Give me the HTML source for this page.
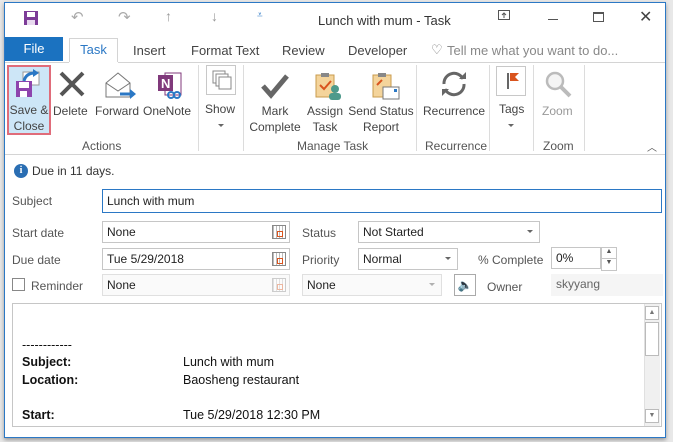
<!DOCTYPE html>
<html><head><meta charset="utf-8"><style>
*{box-sizing:border-box;margin:0;padding:0}
body{width:673px;height:442px;background:#e8e8e8;font-family:"Liberation Sans",sans-serif;font-size:12px;color:#444;position:relative;overflow:hidden}
.a{position:absolute;white-space:nowrap}
#win{position:absolute;left:4px;top:2px;width:662px;height:436px;background:#fff;border:1px solid #2b78c5;box-shadow:0 2px 4px rgba(0,0,0,.35)}
.inp{position:absolute;border:1px solid #c6c6c6;background:#fff;height:22px;padding:3px 4px;color:#222;font-size:12px}
.dis{background:#fafafa;border-color:#e0e0e0}
.lbl{position:absolute;color:#555;font-size:12px}
.rb{position:absolute;text-align:center;font-size:12px;color:#444;line-height:16px}
.sep{position:absolute;top:62px;width:1px;height:86px;background:#dcdcdc}
.gl{position:absolute;top:136px;font-size:12px;color:#555}
.dd{position:absolute;right:6px;top:8px;border-left:3px solid transparent;border-right:3px solid transparent;border-top:3px solid #666}
.cal{position:absolute;right:3px;top:3px;width:14px;height:14px;border:1px solid #888;background:repeating-linear-gradient(90deg,#bbb 0 1px,#fff 1px 3px)}
.cal:after{content:"";position:absolute;right:2px;top:5px;width:4px;height:4px;border:1px solid #d9541e}
.bt{position:absolute;color:#111;font-size:12.5px}
</style></head><body>
<div id="win">
<svg class="a" style="left:18px;top:7px" width="16" height="16"><rect x="1" y="1" width="14" height="14" fill="#7d3c98"/><rect x="4" y="2" width="8" height="5" fill="#fff"/><rect x="4" y="10" width="8" height="5" fill="#e8daef"/></svg>
<div class="a" style="left:66px;top:5px;color:#aaa;font-size:15px">↶</div>
<div class="a" style="left:113px;top:5px;color:#aaa;font-size:15px">↷</div>
<div class="a" style="left:160px;top:5px;color:#999;font-size:14px">↑</div>
<div class="a" style="left:206px;top:5px;color:#999;font-size:14px">↓</div>
<div class="a" style="left:252px;top:7px;color:#2b78c5;font-size:10px">⩡</div>
<div class="a" style="left:313px;top:10px;font-size:13px;color:#333">Lunch with mum - Task</div>
<svg class="a" style="left:493px;top:7px" width="12" height="12"><rect x=".5" y=".5" width="11" height="9" fill="none" stroke="#555"/><path d="M6 8V3M4 5l2-2 2 2" stroke="#555" fill="none"/></svg>
<div class="a" style="left:543px;top:16px;width:10px;height:1px;background:#555"></div>
<div class="a" style="left:588px;top:9px;width:11px;height:10px;border:1px solid #555;border-top-width:2px"></div>
<div class="a" style="left:634px;top:4px;font-size:16px;color:#444">✕</div>
<div class="a" style="left:0;top:34px;width:58px;height:24px;background:#1b72c0;color:#fff;font-size:13px;text-align:center;line-height:23px">File</div>
<div class="a" style="left:64px;top:35px;width:49px;height:25px;background:#fff;border:1px solid #d4d4d4;border-bottom:none;color:#2b78c5;font-size:13px;text-align:center;line-height:22px">Task</div>
<div class="a" style="left:0;top:59px;width:660px;height:1px;background:#d4d4d4"></div>
<div class="a" style="left:64px;top:59px;width:49px;height:1px;background:#fff"></div>
<div class="a" style="left:128px;top:40px;font-size:13px;color:#444">Insert</div>
<div class="a" style="left:186px;top:40px;font-size:13px;color:#444">Format Text</div>
<div class="a" style="left:277px;top:40px;font-size:13px;color:#444">Review</div>
<div class="a" style="left:343px;top:40px;font-size:13px;color:#444">Developer</div>
<div class="a" style="left:426px;top:39px;font-size:13px;color:#777">♡</div>
<div class="a" style="left:442px;top:40px;font-size:13px;color:#888">Tell me what you want to do...</div>
<div class="a" style="left:2px;top:62px;width:44px;height:70px;background:#cde6f7;border:2px solid #e06c7a"></div>
<svg class="a" style="left:9px;top:66px" width="30" height="30"><rect x="9" y="3" width="16" height="13" fill="#fff" stroke="#999"/><rect x="2" y="12" width="16" height="16" fill="#8e44ad"/><rect x="5" y="13" width="10" height="6" fill="#fff"/><rect x="6" y="22" width="7" height="6" fill="#fff"/><path d="M10 12q2-8 11-8" stroke="#2b78c5" stroke-width="3" fill="none"/><path d="M19 0l6 4-6 4z" fill="#2b78c5"/></svg>
<div class="rb" style="left:3px;top:99px;width:42px">Save &amp;<br>Close</div>
<svg class="a" style="left:54px;top:68px" width="26" height="26"><path d="M2 2L24 24M24 2L2 24" stroke="#555" stroke-width="4"/></svg>
<div class="rb" style="left:48px;top:100px">Delete</div>
<svg class="a" style="left:99px;top:68px" width="34" height="30"><path d="M2 12L14 2 26 12V26H2Z" fill="#fff" stroke="#777"/><path d="M2 12L14 20 26 12" fill="none" stroke="#777"/><path d="M16 23H28" stroke="#2b78c5" stroke-width="3"/><path d="M26 18l6 5-6 5z" fill="#2b78c5"/></svg>
<div class="rb" style="left:90px;top:100px">Forward</div>
<svg class="a" style="left:152px;top:68px" width="28" height="30"><rect x="8" y="2" width="16" height="22" fill="#fff" stroke="#80397b"/><rect x="1" y="4" width="15" height="16" fill="#80397b"/><text x="4" y="17" fill="#fff" font-size="13" font-weight="bold" font-family="Liberation Sans">N</text><circle cx="14" cy="24" r="3" fill="none" stroke="#2b78c5" stroke-width="2"/><circle cx="20" cy="24" r="3" fill="none" stroke="#2b78c5" stroke-width="2"/></svg>
<div class="rb" style="left:138px;top:100px">OneNote</div>
<div class="sep" style="left:193px"></div>
<div class="a" style="left:201px;top:62px;width:30px;height:30px;border:1px solid #c8c8c8"></div>
<svg class="a" style="left:207px;top:67px" width="20" height="20"><rect x="1" y="1" width="12" height="12" fill="#fff" stroke="#888"/><rect x="4" y="4" width="12" height="12" fill="#fff" stroke="#888"/><rect x="7" y="7" width="12" height="12" fill="#fff" stroke="#888"/></svg>
<div class="rb" style="left:200px;top:98px">Show</div>
<div class="a" style="left:213px;top:121px;border-left:3px solid transparent;border-right:3px solid transparent;border-top:3px solid #666"></div>
<div class="sep" style="left:238px"></div>
<svg class="a" style="left:255px;top:70px" width="30" height="26"><path d="M3 13L11 22 27 3" stroke="#666" stroke-width="5" fill="none"/></svg>
<div class="rb" style="left:244px;top:100px;width:52px">Mark<br>Complete</div>
<svg class="a" style="left:308px;top:68px" width="30" height="30"><rect x="3" y="4" width="18" height="22" fill="#f4d49b" stroke="#c99b4e"/><rect x="8" y="2" width="8" height="4" fill="#888"/><path d="M7 14l4 4 7-8" stroke="#d9541e" stroke-width="2" fill="none"/><circle cx="22" cy="18" r="4" fill="#4e9a8b"/><rect x="16" y="22" width="12" height="7" rx="3" fill="#4e9a8b"/></svg>
<div class="rb" style="left:300px;top:100px;width:40px">Assign<br>Task</div>
<svg class="a" style="left:365px;top:68px" width="30" height="30"><rect x="3" y="4" width="18" height="22" fill="#f4d49b" stroke="#c99b4e"/><rect x="8" y="2" width="8" height="4" fill="#888"/><path d="M7 14l5-5" stroke="#d9541e" stroke-width="2"/><rect x="13" y="16" width="16" height="12" fill="#fff" stroke="#777"/><rect x="24" y="18" width="3" height="3" fill="#2b78c5"/></svg>
<div class="rb" style="left:343px;top:100px;width:66px">Send Status<br>Report</div>
<div class="sep" style="left:411px"></div>
<svg class="a" style="left:434px;top:66px" width="30" height="30"><path d="M5 15A10 10 0 0 1 24 10" stroke="#666" stroke-width="3" fill="none"/><path d="M25 15A10 10 0 0 1 6 20" stroke="#666" stroke-width="3" fill="none"/><path d="M20 10h7V3z" fill="#666"/><path d="M10 20H3v7z" fill="#666"/></svg>
<div class="rb" style="left:418px;top:100px">Recurrence</div>
<div class="sep" style="left:484px"></div>
<div class="a" style="left:491px;top:63px;width:30px;height:30px;border:1px solid #c8c8c8"></div>
<svg class="a" style="left:499px;top:68px" width="16" height="20"><rect x="3" y="2" width="2" height="16" fill="#666"/><path d="M6 2h9l-4 4 4 4H6z" fill="#d9541e"/></svg>
<div class="rb" style="left:494px;top:98px">Tags</div>
<div class="a" style="left:503px;top:121px;border-left:3px solid transparent;border-right:3px solid transparent;border-top:3px solid #666"></div>
<div class="sep" style="left:528px"></div>
<svg class="a" style="left:538px;top:66px" width="30" height="30"><circle cx="12" cy="12" r="8" fill="#f4f4f4" stroke="#bbb" stroke-width="2.5"/><path d="M18 18l9 9" stroke="#bbb" stroke-width="4"/></svg>
<div class="rb" style="left:537px;top:100px;color:#999">Zoom</div>
<div class="sep" style="left:579px"></div>
<div class="gl" style="left:77px">Actions</div>
<div class="gl" style="left:292px">Manage Task</div>
<div class="gl" style="left:420px">Recurrence</div>
<div class="gl" style="left:538px">Zoom</div>
<div class="a" style="left:642px;top:136px;font-size:10px;color:#555">︿</div>
<div class="a" style="left:0;top:151px;width:660px;height:1px;background:#d4d4d4"></div>
<div class="a" style="left:9px;top:161px;width:14px;height:14px;border-radius:50%;background:#2a6eb3;color:#fff;font-size:10px;font-weight:bold;text-align:center;line-height:14px;font-family:'Liberation Serif',serif">i</div>
<div class="a" style="left:27px;top:161px;color:#333">Due in 11 days.</div>
<div class="lbl" style="left:7px;top:191px">Subject</div>
<div class="inp" style="left:97px;top:186px;width:560px;height:24px;border-color:#2b78c5;padding-top:4px">Lunch with mum</div>
<div class="lbl" style="left:7px;top:223px">Start date</div>
<div class="inp" style="left:97px;top:218px;width:188px">None<div class="cal"></div></div>
<div class="lbl" style="left:297px;top:223px">Status</div>
<div class="inp" style="left:353px;top:218px;width:182px">Not Started<div class="dd"></div></div>
<div class="lbl" style="left:7px;top:250px">Due date</div>
<div class="inp" style="left:97px;top:245px;width:188px">Tue 5/29/2018<div class="cal"></div></div>
<div class="lbl" style="left:297px;top:250px">Priority</div>
<div class="inp" style="left:353px;top:245px;width:100px">Normal<div class="dd"></div></div>
<div class="lbl" style="left:473px;top:250px">% Complete</div>
<div class="inp" style="left:546px;top:244px;width:50px">0%</div>
<div class="a" style="left:596px;top:244px;width:16px;height:24px;border:1px solid #c6c6c6;background:#fff"><div style="height:11px;border-bottom:1px solid #c6c6c6;font-size:7px;text-align:center;color:#555">▲</div><div style="font-size:7px;text-align:center;color:#555">▼</div></div>
<div class="a" style="left:7px;top:275px;width:13px;height:13px;border:1px solid #888;background:#fff"></div>
<div class="lbl" style="left:26px;top:276px">Reminder</div>
<div class="inp dis" style="left:97px;top:271px;width:188px">None<div class="cal" style="opacity:.4"></div></div>
<div class="inp dis" style="left:297px;top:271px;width:140px">None<div class="dd" style="opacity:.5"></div></div>
<div class="a" style="left:449px;top:271px;width:22px;height:22px;border:1px solid #aaa;background:#fff;text-align:center;font-size:12px;line-height:20px;color:#a07a20">🔈</div>
<div class="lbl" style="left:482px;top:277px">Owner</div>
<div class="a" style="left:546px;top:271px;width:112px;height:22px;background:#f5f5f5;color:#666;padding:3px 5px">skyyang</div>
<div class="a" style="left:7px;top:300px;width:650px;height:124px;border:1px solid #c6c6c6;background:#fff"></div>
<div class="a" style="left:639px;top:301px;width:16px;height:122px;background:#f0f0f0;border-left:1px solid #e0e0e0"></div>
<div class="a" style="left:640px;top:303px;width:14px;height:14px;border:1px solid #bbb;background:#fff;font-size:7px;text-align:center;color:#777;line-height:12px">▲</div>
<div class="a" style="left:640px;top:319px;width:14px;height:34px;border:1px solid #bbb;background:#fff"></div>
<div class="a" style="left:640px;top:406px;width:14px;height:14px;border:1px solid #bbb;background:#fff;font-size:7px;text-align:center;color:#777;line-height:12px">▼</div>
<div class="bt" style="left:17px;top:335px">------------</div>
<div class="bt" style="left:17px;top:352px;font-weight:bold">Subject:</div>
<div class="bt" style="left:178px;top:352px">Lunch with mum</div>
<div class="bt" style="left:17px;top:370px;font-weight:bold">Location:</div>
<div class="bt" style="left:178px;top:370px">Baosheng restaurant</div>
<div class="bt" style="left:17px;top:405px;font-weight:bold">Start:</div>
<div class="bt" style="left:178px;top:405px">Tue 5/29/2018 12:30 PM</div>
</div>
</body></html>
